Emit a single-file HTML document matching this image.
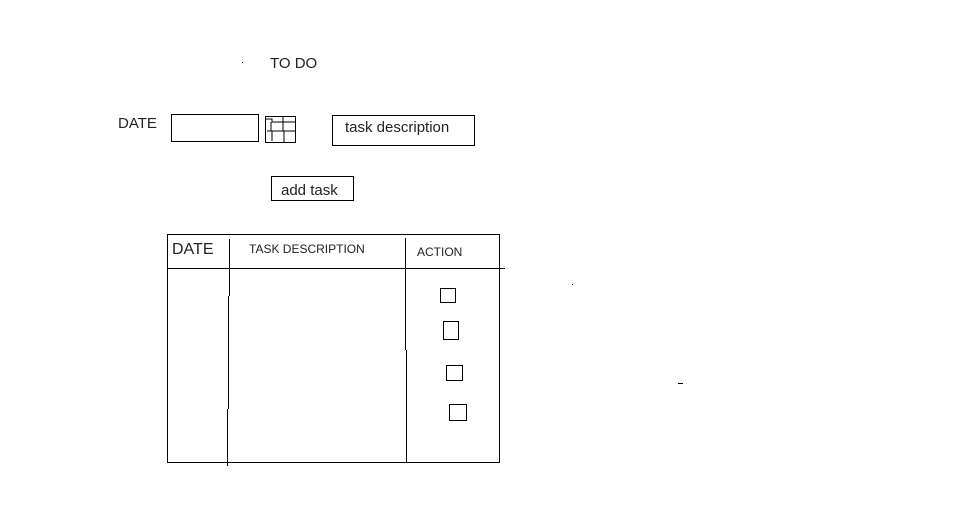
<!DOCTYPE html>
<html><head><meta charset="utf-8"><style>
html,body{margin:0;padding:0;background:#fff;width:968px;height:507px;overflow:hidden}
svg{position:absolute;left:0;top:0}
text{font-family:"Liberation Sans",Arial,sans-serif;fill:#222}
</style></head><body>
<svg width="968" height="507" viewBox="0 0 968 507" shape-rendering="crispEdges">
<g fill="none" stroke="#000" stroke-width="1">
<rect x="171.5" y="114.5" width="87" height="27"/>
<rect x="265.5" y="116.5" width="30" height="26"/>
<path d="M266 119H272V122H295M271 122V131H295M267 131H272V141M283 117V131M284 131V142"/>
<rect x="332.5" y="115.5" width="142" height="30"/>
<rect x="271.5" y="176.5" width="82" height="24"/>
<rect x="167.5" y="234.5" width="332" height="228"/>
<path d="M167 268.5H505"/>
<path d="M229.5 239V296M228.5 296V409M227.5 409V466"/>
<path d="M405.5 238V350M406.5 350V463"/>
<rect x="440.5" y="288.5" width="15" height="14"/>
<rect x="443.5" y="321.5" width="15" height="18"/>
<rect x="446.5" y="365.5" width="16" height="15"/>
<rect x="449.5" y="404.5" width="17" height="16"/>
<path d="M678 383.5H683"/>
</g>
<rect x="242" y="62" width="1" height="1" fill="#000"/>
<rect x="572" y="284" width="1" height="1" fill="#000"/>
<text x="270" y="68" font-size="15">TO DO</text>
<text x="118" y="128" font-size="15">DATE</text>
<text x="345" y="132" font-size="15">task description</text>
<text x="281" y="195" font-size="15">add task</text>
<text x="172" y="254" font-size="16">DATE</text>
<text x="249" y="253" font-size="12">TASK DESCRIPTION</text>
<text x="417" y="256" font-size="12">ACTION</text>
</svg>
</body></html>
